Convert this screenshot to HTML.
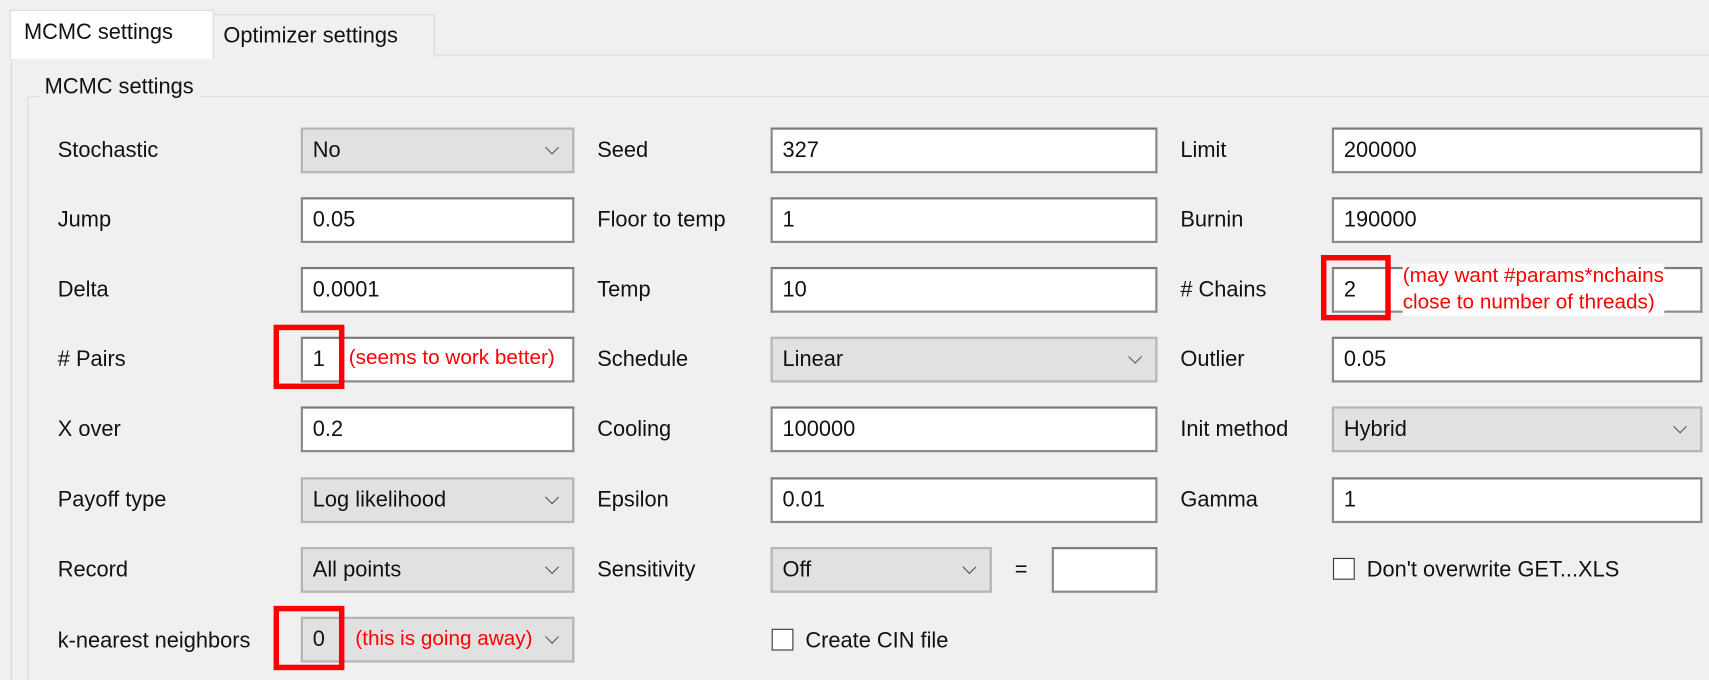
<!DOCTYPE html>
<html style="overflow:hidden;width:1709px;height:680px"><head><style>
body{margin:0;width:1709px;height:680px;overflow:hidden;background:#f0f0f0;position:relative;}
#s{position:absolute;left:0;top:0;width:1568px;height:624px;overflow:hidden;transform:scale(1.0899,1.0897);transform-origin:0 0;font-family:"Liberation Sans","DejaVu Sans",sans-serif;font-size:20px;color:#111;}
.a{position:absolute;}
.l{position:absolute;line-height:24px;margin-top:1px;}
.in{position:absolute;background:#fff;border:2px solid #8a8a8a;border-top-color:#7a7a7a;box-sizing:border-box;height:42px;padding-left:9px;line-height:38px;}
.cb{position:absolute;background:#e1e1e1;border:2px solid #b4b4b4;box-sizing:border-box;height:42px;padding-left:9px;line-height:38px;}
.cb:after{content:"";position:absolute;right:14px;top:12px;width:8px;height:8px;border-right:1.5px solid #555;border-bottom:1.5px solid #555;transform:rotate(45deg);}
.red{position:absolute;border:5px solid #f00;box-sizing:border-box;}
.rt{position:absolute;color:#f00;font-size:19px;line-height:24px;}
.ck{position:absolute;width:20px;height:20px;border:1.5px solid #333;background:#fff;box-sizing:border-box;}
</style></head><body><div id="s">
<div class="a" style="left:10px;top:50px;width:1570px;height:590px;border:1px solid #d9d9d9;background:#f0f0f0"></div>
<div class="a" style="left:195px;top:13px;width:202px;height:38px;border:1px solid #d9d9d9;border-bottom:none;background:#f0f0f0"></div>
<div class="l" style="left:205px;top:20px">Optimizer settings</div>
<div class="a" style="left:9px;top:9px;width:185px;height:44px;border:1px solid #d9d9d9;border-bottom:none;background:#fff"></div>
<div class="l" style="left:22px;top:17px">MCMC settings</div>
<div class="a" style="left:25px;top:88px;width:1560px;height:560px;border:1px solid #dcdcdc;border-radius:2px"></div>
<div class="l" style="left:37px;top:67px;background:#f0f0f0;padding:0 4px">MCMC settings</div>

<div class="l" style="left:53px;top:125px">Stochastic</div><div class="cb" style="left:276px;top:117px;width:251px">No</div>
<div class="l" style="left:53px;top:189px">Jump</div><div class="in" style="left:276px;top:181px;width:251px">0.05</div>
<div class="l" style="left:53px;top:253px">Delta</div><div class="in" style="left:276px;top:245px;width:251px">0.0001</div>
<div class="l" style="left:53px;top:317px"># Pairs</div><div class="in" style="left:276px;top:309px;width:251px">1</div>
<div class="l" style="left:53px;top:381px">X over</div><div class="in" style="left:276px;top:373px;width:251px">0.2</div>
<div class="l" style="left:53px;top:446px">Payoff type</div><div class="cb" style="left:276px;top:438px;width:251px">Log likelihood</div>
<div class="l" style="left:53px;top:510px">Record</div><div class="cb" style="left:276px;top:502px;width:251px">All points</div>
<div class="cb" style="left:276px;top:566px;width:251px">0</div>
<div class="l" style="left:53px;top:575px;background:#f0f0f0;width:222px;white-space:nowrap;overflow:hidden">k-nearest neighbors</div>

<div class="l" style="left:548px;top:125px">Seed</div><div class="in" style="left:707px;top:117px;width:355px">327</div>
<div class="l" style="left:548px;top:189px">Floor to temp</div><div class="in" style="left:707px;top:181px;width:355px">1</div>
<div class="l" style="left:548px;top:253px">Temp</div><div class="in" style="left:707px;top:245px;width:355px">10</div>
<div class="l" style="left:548px;top:317px">Schedule</div><div class="cb" style="left:707px;top:309px;width:355px">Linear</div>
<div class="l" style="left:548px;top:381px">Cooling</div><div class="in" style="left:707px;top:373px;width:355px">100000</div>
<div class="l" style="left:548px;top:446px">Epsilon</div><div class="in" style="left:707px;top:438px;width:355px">0.01</div>
<div class="l" style="left:548px;top:510px">Sensitivity</div><div class="cb" style="left:707px;top:502px;width:203px">Off</div>
<div class="l" style="left:931px;top:510px">=</div><div class="in" style="left:965px;top:502px;width:97px"></div>
<div class="ck" style="left:708px;top:577px"></div><div class="l" style="left:739px;top:575px">Create CIN file</div>

<div class="l" style="left:1083px;top:125px">Limit</div><div class="in" style="left:1222px;top:117px;width:340px">200000</div>
<div class="l" style="left:1083px;top:189px">Burnin</div><div class="in" style="left:1222px;top:181px;width:340px">190000</div>
<div class="l" style="left:1083px;top:253px"># Chains</div><div class="in" style="left:1222px;top:245px;width:340px">2</div>
<div class="l" style="left:1083px;top:317px">Outlier</div><div class="in" style="left:1222px;top:309px;width:340px">0.05</div>
<div class="l" style="left:1083px;top:381px">Init method</div><div class="cb" style="left:1222px;top:373px;width:340px">Hybrid</div>
<div class="l" style="left:1083px;top:446px">Gamma</div><div class="in" style="left:1222px;top:438px;width:340px">1</div>
<div class="ck" style="left:1223px;top:512px"></div><div class="l" style="left:1254px;top:510px">Don't overwrite GET...XLS</div>

<div class="red" style="left:251px;top:298px;width:65px;height:59px"></div>
<div class="rt" style="left:320px;top:317px">(seems to work better)</div>
<div class="red" style="left:1212px;top:234px;width:64px;height:60px"></div>
<div class="rt" style="left:1287px;top:242px;background:#fff">(may want #params*nchains<br>close to number of threads)</div>
<div class="red" style="left:251px;top:556px;width:65px;height:59px"></div>
<div class="rt" style="left:326px;top:575px">(this is going away)</div>
</div></body></html>
